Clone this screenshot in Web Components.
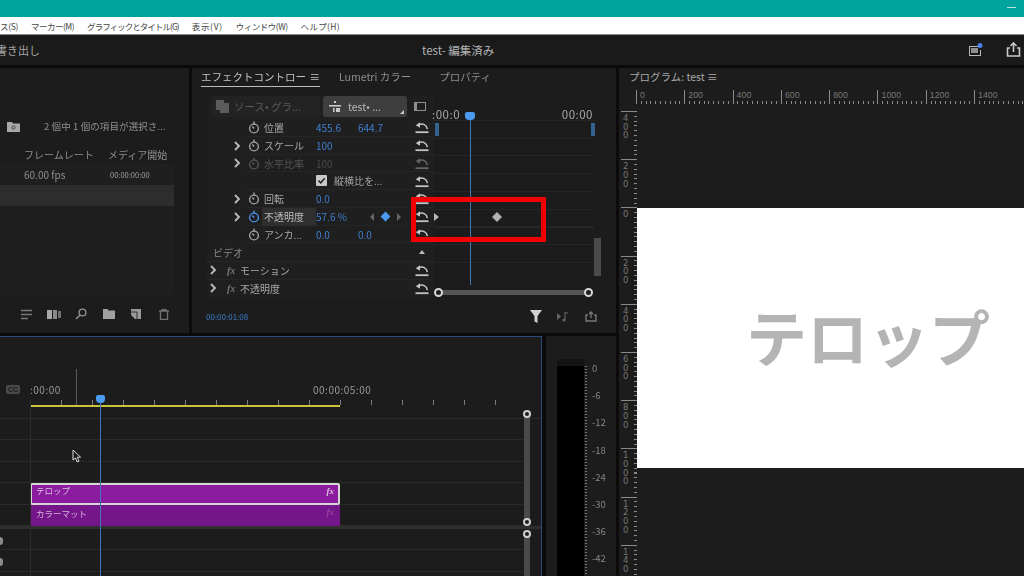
<!DOCTYPE html>
<html lang="ja">
<head>
<meta charset="utf-8">
<title>test - 編集済み</title>
<style>
  html, body { margin: 0; height: 100%; background: #0b0b0b; overflow: hidden; }
  body { font-family: "Noto Sans CJK JP", "Noto Sans", sans-serif; color: #a8a8a8; }
</style>
</head>
<body>
<app-shell></app-shell>

<script>
const icons = {
  stopwatch: (c = "#a0a0a0") => `<svg width="12" height="13" viewBox="0 0 12 13" fill="none" stroke="${c}" stroke-width="1.4"><circle cx="6" cy="7.5" r="4.4"/><path d="M6 0.6v3M6 7.5l-1.6-2"/></svg>`,
  reset: (c = "#c4c4c4") => `<svg width="14" height="13" viewBox="0 0 14 13" fill="none" stroke="${c}" stroke-width="1.5"><path d="M4 3.6c3.6-1.2 7.6-.2 8.4 4.6"/><path d="M0.8 4.2l4.2-3v5.6z" fill="${c}" stroke="none"/><path d="M0.5 11.2h13" stroke-width="1.8"/></svg>`,
  chevron: (c = "#b8b8b8") => `<svg width="8" height="10" viewBox="0 0 8 10" fill="none" stroke="${c}" stroke-width="1.9"><path d="M2 1l4 4-4 4"/></svg>`,
};

class AppShell extends HTMLElement {
  constructor() {
    super();
    this.attachShadow({ mode: "open" });
    this.shadowRoot.innerHTML = `
      <style>
        :host { display: flex; flex-direction: column; width: 1024px; height: 576px; overflow: hidden; filter: blur(0.35px); }
        .work { flex: 1; min-height: 0; display: flex; gap: 3px; padding-top: 3px; }
        .left { width: 616px; display: flex; flex-direction: column; gap: 3px; }
        .top { height: 265px; display: flex; gap: 3px; }
        .bottom { flex: 1; min-height: 0; display: flex; gap: 4px; }
        program-monitor { flex: 1; min-width: 0; }
      </style>
      <title-bar></title-bar>
      <menu-bar></menu-bar>
      <head-bar></head-bar>
      <div class="work">
        <div class="left">
          <div class="top">
            <project-panel></project-panel>
            <effect-panel></effect-panel>
          </div>
          <div class="bottom">
            <timeline-panel></timeline-panel>
            <audio-meter></audio-meter>
          </div>
        </div>
        <program-monitor></program-monitor>
      </div>
    `;
  }
}

class TitleBar extends HTMLElement {
  constructor() {
    super();
    this.attachShadow({ mode: "open" });
    this.shadowRoot.innerHTML = `
      <style>
        :host { display: flex; justify-content: flex-end; height: 17px; background: #00a49c; }
        i { width: 9px; height: 1px; margin: 7px 8px 0 0; background: #b5e6e2; }
      </style>
      <i></i>
    `;
  }
}

class MenuBar extends HTMLElement {
  constructor() {
    super();
    this.attachShadow({ mode: "open" });
    const items = [["ス(S)", -0.35], ["マーカー(M)", -0.5], ["グラフィックとタイトル(G)", -0.95], ["表示(V)", 0.7], ["ウィンドウ(W)", -0.5], ["ヘルプ(H)", 0.3]];
    this.shadowRoot.innerHTML = `
      <style>
        :host { display: flex; gap: 13px; height: 17px; align-items: center; background: #fff; border-bottom: 1px solid #8a8a8a; overflow: hidden; font-size: 8.5px; color: #444; white-space: nowrap; }
      </style>
      ${items.map(([t, s]) => `<span style="letter-spacing:${s}px">${t}</span>`).join("")}
    `;
  }
}

class HeadBar extends HTMLElement {
  constructor() {
    super();
    this.attachShadow({ mode: "open" });
    this.shadowRoot.innerHTML = `
      <style>
        :host { display: grid; grid-template-columns: 422px auto 1fr; align-items: center; height: 30px; background: #1a1a1a; overflow: hidden; white-space: nowrap; }
        .export { font-size: 11px; margin-left: -4px; color: #a5a5a5; }
        .name { font-size: 11.5px; color: #b4b4b4; }
        .tools { display: flex; justify-content: flex-end; gap: 23px; padding-right: 3px; align-items: center; }
      </style>
      <span class="export">書き出し</span>
      <span class="name">test- 編集済み</span>
      <div class="tools">
        <svg width="15" height="15" viewBox="0 0 15 15"><path d="M1 3h9v1H2v8h10V7h1v6H1z" fill="#b9b9b9"/><rect x="3" y="5" width="7" height="5" fill="#8e8e8e"/><circle cx="12" cy="2.5" r="2.5" fill="#4a84e6"/></svg>
        <svg width="15" height="16" viewBox="0 0 15 16" fill="none" stroke="#c8c8c8" stroke-width="1.6"><path d="M4 6H1.5v8h12V6H11M7.5 10V1.5M4.5 4l3-3 3 3"/></svg>
      </div>
    `;
  }
}

class ProjectPanel extends HTMLElement {
  constructor() {
    super();
    this.attachShadow({ mode: "open" });
    this.shadowRoot.innerHTML = `
      <style>
        :host { display: flex; flex-direction: column; width: 189px; background: #1c1c1c; overflow: hidden; white-space: nowrap; font-size: 9.5px; color: #8f8f8f; }
        .status { display: flex; align-items: center; height: 16px; margin-top: 50px; padding-left: 7px; }
        .status span { margin-left: 24px; font-size: 9.5px; letter-spacing: 0.1px; }
        .cols { display: grid; grid-template-columns: 84px auto; height: 14px; margin-top: 13px; padding-left: 24px; align-items: center; font-size: 10px; }
        .table { height: 133px; margin-top: 3px; width: 174px; box-sizing: border-box; background: #1f1f1f; border-radius: 0 6px 6px 0; }
        .row { display: grid; grid-template-columns: 86px auto; height: 21px; padding-left: 24px; align-items: center; font-size: 10px; }
        .row small { font-size: 7.5px; color: #a0a0a0; }
        .sel { background: #2d2d2d; }
        .tools { display: grid; grid-template-columns: repeat(6, 27.4px); padding: 11px 0 0 13px; align-items: center; justify-items: center; }
        .tools svg { display: block; }
      </style>
      <div class="status">
        <svg width="13" height="11" viewBox="0 0 13 11"><path d="M0 1h5l1 1.5h7V11H0z" fill="#a8a8a8"/><circle cx="6.5" cy="6.5" r="1.6" fill="none" stroke="#444"/></svg>
        <span>2 個中 1 個の項目が選択さ...</span>
      </div>
      <div class="cols"><span>フレームレート</span><span>メディア開始</span></div>
      <div class="table">
        <div class="row"><span>60.00 fps</span><small>00:00:00:00</small></div>
        <div class="row sel"></div>
      </div>
      <div class="tools">
        <svg width="13" height="11" viewBox="0 0 13 11" stroke="#777" stroke-width="1.5"><path d="M1 1.5h11M1 5.5h11M1 9.5h7"/></svg>
        <svg width="14" height="9" viewBox="0 0 14 9"><rect width="5" height="9" fill="#a8a8a8"/><rect x="6" width="4" height="9" fill="#8a8a8a"/><rect x="11" y="1" width="3" height="7" fill="#6e6e6e"/></svg>
        <svg width="12" height="12" viewBox="0 0 12 12" fill="none" stroke="#8f8f8f" stroke-width="1.4"><circle cx="7.5" cy="4.5" r="3.4"/><path d="M5 7l-4 4"/></svg>
        <svg width="12" height="10" viewBox="0 0 12 10"><path d="M0 0h4.5l1 1.5H12V10H0z" fill="#a0a0a0"/></svg>
        <svg width="10" height="10" viewBox="0 0 10 10"><path d="M0 0h10v10H4L0 6z" fill="#9a9a9a"/><path d="M0 3h6v7" fill="none" stroke="#333"/></svg>
        <svg width="10" height="11" viewBox="0 0 10 11" fill="none" stroke="#707070" stroke-width="1.3"><path d="M0 2h10M3 2V.7h4V2M1.5 2.5v8h7v-8"/></svg>
      </div>
    `;
  }
}

class EffectRow extends HTMLElement {
  constructor() {
    super();
    this.attachShadow({ mode: "open" });
  }
  connectedCallback() {
    const label = this.getAttribute("label") || "";
    const dim = this.hasAttribute("dim");
    const active = this.hasAttribute("active");
    const watch = active ? "#4a90e0" : dim ? "#555" : "#a0a0a0";
    this.shadowRoot.innerHTML = `
      <style>
        :host { display: grid; grid-template-columns: 9px 18px 56px 42px 1fr 14px; align-items: center; height: 17.75px; padding: 0 5px 0 26px; font-size: 10px; color: ${dim ? "#555" : "#a9a9a9"}; white-space: nowrap; background: linear-gradient(#262626, #262626) 40px 100% / 100% 1px no-repeat; }
        .chev, .reset { display: flex; }
        .watch { display: flex; padding-left: 6px; }
        .label { align-self: stretch; display: flex; align-items: center; margin-left: 2px; padding-left: 2px; ${active ? "background: #2f2f2f; color: #bdbdbd;" : ""} }
        .val { color: ${dim ? "#4a4a4a" : "#3f7fd0"}; }
        .slot { min-width: 0; color: #3f7fd0; }
      </style>
      <span class="chev">${this.hasAttribute("chev") ? icons.chevron() : ""}</span>
      <span class="watch">${this.hasAttribute("bare") ? "" : icons.stopwatch(watch)}</span>
      <span class="label">${label}</span>
      <span class="val">${this.getAttribute("v1") || ""}</span>
      <span class="slot"><slot></slot></span>
      <span class="reset">${icons.reset(dim ? "#666" : "#c4c4c4")}</span>
    `;
  }
}

class EffectGroup extends HTMLElement {
  constructor() {
    super();
    this.attachShadow({ mode: "open" });
    this.shadowRoot.innerHTML = `
      <style>
        :host { display: grid; grid-template-columns: 18px 13px 1fr 14px; align-items: center; height: 17.75px; padding: 0 5px 0 2px; font-size: 10px; color: #a9a9a9; white-space: nowrap; border-top: 1px solid #262626; box-sizing: border-box; }
        i { font: italic bold 10px "Liberation Serif", serif; color: #777; }
        .chev { display: flex; }
      </style>
      <span class="chev">${icons.chevron()}</span>
      <i>fx</i>
      <span><slot></slot></span>
      <span style="display:flex">${icons.reset()}</span>
    `;
  }
}

class EffectPanel extends HTMLElement {
  constructor() {
    super();
    this.attachShadow({ mode: "open" });
    this.shadowRoot.innerHTML = `
      <style>
        :host { display: flex; flex-direction: column; flex: 1; position: relative; background: #1c1c1c; overflow: hidden; white-space: nowrap; }
        .tabs { display: flex; height: 18px; padding-left: 9px; font-size: 10.5px; color: #8e8e8e; align-items: center; }
        .tab { height: 18px; line-height: 18px; overflow: hidden; }
        .on { width: 119px; color: #c2c2c2; border-bottom: 1px solid #bcbcbc; display: flex; justify-content: space-between; }
        .on b { font-weight: 400; }
        .body { display: flex; margin: 10px 0 0 15px; height: 202px; }
        .pane { width: 227px; background: #1f1f1f; border-radius: 3px 0 0 3px; flex: none; }
        .head { display: flex; height: 23px; align-items: flex-start; padding-left: 5px; box-sizing: border-box; }
        .src { display: flex; align-items: center; gap: 5px; width: 108px; height: 21px; box-sizing: border-box; padding-left: 4px; font-size: 10.5px; color: #5a5a5a; background: #232323; border-radius: 3px; }
        .seq { display: flex; align-items: center; gap: 7px; width: 84px; height: 21px; box-sizing: border-box; padding-left: 6px; margin-left: 3px; font-size: 10.5px; color: #b8b8b8; background: #3e3e3e; border-radius: 3px; position: relative; }
        .seq::after { content: ""; position: absolute; right: 3px; bottom: 3px; border: 2px solid transparent; border-right-color: #ccc; border-bottom-color: #ccc; }
        .sq { margin: 6px 0 0 7px; width: 12px; height: 9px; border: 1px solid #8e8e8e; border-left-width: 3px; box-sizing: border-box; }
        .group { display: grid; grid-template-columns: 1fr 8px; align-items: center; height: 17.75px; padding: 0 7px 0 6px; font-size: 10px; color: #888; box-sizing: border-box; }
        .group i { width: 0; height: 0; border: 3.5px solid transparent; border-top: 0; border-bottom: 4px solid #bbb; }
        .nav { display: flex; align-items: center; margin-left: 12px; gap: 8px; }
        .nav .t { width: 0; height: 0; border: 4px solid transparent; }
        .nav .l { border-right: 4.5px solid #666; border-left: 0; }
        .nav .r { border-left: 4.5px solid #666; border-right: 0; }
        .nav .d { width: 7px; height: 7px; background: #4a9bef; transform: rotate(45deg); }
        .check { display: inline-flex; align-items: center; gap: 7px; color: #a0a0a0; }
        .check svg { display: block; }
        .keys { flex: 1; position: relative; }
        .time { display: flex; justify-content: space-between; width: 159px; height: 24px; font-size: 11.5px; letter-spacing: 0.5px; color: #a8a8a8; line-height: 36px; }
        .lines { position: absolute; left: 0; top: 24px; width: 160px; height: 160px; background: repeating-linear-gradient(#262626 0 1px, transparent 1px 17.75px); }
        .mark { position: absolute; top: 27px; width: 4px; height: 13px; background: #33628f; }
        .kf { position: absolute; }
        .thumb { position: absolute; left: 160px; top: 142px; width: 7px; height: 38px; background: #4a4a4a; }
        .range { position: absolute; left: 4px; top: 194px; width: 151px; height: 5px; background: #555; }
        .range i { position: absolute; top: -2px; width: 5px; height: 5px; border: 2px solid #d8d8d8; border-radius: 50%; background: #1c1c1c; }
        .head-pin { position: absolute; left: 31px; top: 16px; width: 10px; height: 8px; background: #4a9bef; border-radius: 2px 2px 4px 4px; }
        .pin { position: absolute; left: 36px; top: 22px; width: 1px; height: 167px; background: #3f76b5; }
        .foot { display: flex; align-items: center; margin: 8px 0 0 14px; padding-right: 19px; height: 20px; font-size: 8px; color: #3f7fd0; }
        .foot span { flex: 1; }
        .foot div { display: flex; gap: 15px; align-items: center; }
        .callout { position: absolute; left: 219px; top: 129px; width: 135px; height: 45px; box-sizing: border-box; border: 5.5px solid #f00000; }
      </style>
      <div class="tabs">
        <div class="tab on"><b>エフェクトコントロー</b><span>≡</span></div>
        <div class="tab" style="margin-left:19px">Lumetri カラー</div>
        <div class="tab" style="margin-left:28px">プロパティ</div>
      </div>
      <div class="body">
        <div class="pane">
          <div class="head">
            <div class="src">
              <svg width="13" height="13" viewBox="0 0 13 13"><path d="M0 0h8v3h5v10H4v-3H0z" fill="#5c5c5c"/></svg>
              <span>ソース• グラ...</span>
            </div>
            <div class="seq">
              <svg width="12" height="11" viewBox="0 0 12 11" fill="#c8c8c8"><rect x="5" width="2" height="2"/><rect y="4" width="12" height="1.6"/><rect x="4" y="7" width="1.6" height="4"/><rect x="7" y="7" width="4" height="4"/></svg>
              <span>test• ...</span>
            </div>
            <span class="sq"></span>
          </div>
          <div class="rows">
            <effect-row label="位置" v1="455.6"><span>644.7</span></effect-row>
            <effect-row label="スケール" v1="100" chev></effect-row>
            <effect-row label="水平比率" v1="100" chev dim></effect-row>
            <effect-row bare>
              <span class="check" style="margin-left:-42px">
                <svg width="11" height="11" viewBox="0 0 11 11"><rect width="11" height="11" rx="1" fill="#c8c8c8"/><path d="M2.5 5.5l2.2 2.3 4-4.5" fill="none" stroke="#222" stroke-width="1.5"/></svg>
                縦横比を...
              </span>
            </effect-row>
            <effect-row label="回転" v1="0.0" chev></effect-row>
            <effect-row label="不透明度" v1="57.6 %" chev active>
              <span class="nav"><i class="t l"></i><i class="d"></i><i class="t r"></i></span>
            </effect-row>
            <effect-row label="アンカ..." v1="0.0"><span>0.0</span></effect-row>
          </div>
          <div class="group"><span>ビデオ</span><i></i></div>
          <effect-group>モーション</effect-group>
          <effect-group>不透明度</effect-group>
        </div>
        <div class="keys">
          <div class="time"><span style="margin-left:-2px">:00:0</span><span>00:00</span></div>
          <div class="lines"></div>
          <i class="mark" style="left:1px"></i>
          <i class="mark" style="left:157px"></i>
          <svg class="kf" style="left:0;top:117px" width="5" height="8" viewBox="0 0 5 8"><path d="M0 0l5 4-5 4z" fill="#b8b8b8"/></svg>
          <svg class="kf" style="left:58px;top:116px" width="10" height="10" viewBox="0 0 10 10"><path d="M5 0l5 5-5 5-5-5z" fill="#b0b0b0"/></svg>
          <i class="thumb"></i>
          <div class="range"><i style="left:-4px"></i><i style="right:-4px"></i></div>
          <i class="pin"></i>
          <i class="head-pin"></i>
        </div>
      </div>
      <div class="foot">
        <span>00:00:01:08</span>
        <div>
          <svg width="12" height="13" viewBox="0 0 12 13"><path d="M0 0h12L7.5 6v7l-3-1.5V6z" fill="#d0d0d0"/></svg>
          <svg width="13" height="11" viewBox="0 0 13 11"><path d="M0 2l4 3.5L0 9z" fill="#666"/><path d="M8 9V1l3 1.5" fill="none" stroke="#666"/><circle cx="7" cy="9" r="1.6" fill="#666"/></svg>
          <svg width="12" height="11" viewBox="0 0 12 11" fill="none" stroke="#777" stroke-width="1.4"><path d="M3 4H1v6h10V4H9M6 7V1M4 3l2-2 2 2"/></svg>
        </div>
      </div>
      <div class="callout"></div>
    `;
  }
}

class TimelinePanel extends HTMLElement {
  constructor() {
    super();
    this.attachShadow({ mode: "open" });
    const track = (content = "") => `<div class="track">${content}</div>`;
    this.shadowRoot.innerHTML = `
      <style>
        :host { display: flex; flex-direction: column; width: 542px; position: relative; box-sizing: border-box; background: #1c1c1c; border-top: 1px solid #2b4a78; border-right: 1px solid #2b4a78; overflow: hidden; white-space: nowrap; }
        .labels { display: flex; align-items: center; height: 62px; padding-top: 43px; box-sizing: border-box; flex: none; }
        .cc { width: 14px; height: 9px; margin-left: 6px; border-radius: 2px; background: #4a4a4a; color: #1c1c1c; font: bold 7px/9px "Liberation Sans", sans-serif; text-align: center; }
        .tc { font-size: 10px; letter-spacing: 0.5px; color: #9a9a9a; }
        .ruler { height: 20px; flex: none; position: relative; box-sizing: border-box; border-bottom: 1px solid #2a2a2a; padding-left: 30px; }
        .ticks { height: 5px; margin-top: 1px; width: 468px; background: repeating-linear-gradient(90deg, #7d7d7d 0 1px, transparent 1px 31px); }
        .bar { width: 310px; height: 2px; background: #c9c43c; }
        .tracks { flex: 1; min-height: 0; }
        .track { height: 21.4px; box-sizing: border-box; border-bottom: 1px solid #2a2a2a; padding-left: 30px; display: flex; margin-right: 18px; }
        .split { height: 3px; background: #2f2f2f; }
        .clip { width: 310px; height: 21.4px; box-sizing: border-box; padding-left: 6px; font-size: 8.5px; line-height: 16px; color: #d8b8dc; display: flex; justify-content: space-between; }
        .clip i { font: italic bold 9px/15px "Liberation Serif", serif; padding-right: 6px; }
        .a { background: #8c1c9f; border: 2px solid #d6d6d6; border-radius: 2px; padding-left: 4px; color: #dcc0e0; line-height: 11px; }
        .a i { line-height: 13px; padding-right: 4px; }
        .b { background: #74158a; }
        .b i { color: #94449f; }
        .col { position: absolute; left: 30px; top: 62px; bottom: 0; width: 1px; background: #2a2a2a; }
        .stem { position: absolute; left: 76px; top: 32px; width: 1px; height: 36px; background: #5a5a5a; }
        .pin { position: absolute; left: 100px; top: 63px; bottom: 0; width: 1px; background: #3f76b5; }
        .pinhead { position: absolute; left: 96px; top: 58px; width: 9px; height: 8px; background: #4a9bef; border-radius: 2px 2px 4px 4px; }
        .v { position: absolute; left: 524px; width: 6px; background: #4a4a4a; }
        .knob { position: absolute; left: 523px; width: 4px; height: 4px; border: 2px solid #d0d0d0; border-radius: 50%; background: #1c1c1c; }
        .mic { position: absolute; left: -3px; width: 6px; height: 8px; border-radius: 3px; background: #8a8a8a; }
        .cursor { position: absolute; left: 72px; top: 112px; }
      </style>
      <div class="labels">
        <span class="cc">CC</span>
        <span class="tc" style="margin-left:10px;width:283px">:00:00</span>
        <span class="tc">00:00:05:00</span>
      </div>
      <div class="ruler"><div class="ticks"></div><div class="bar"></div></div>
      <div class="tracks">
        ${track()}${track()}${track()}
        ${track('<div class="clip a"><span>テロップ</span><i>fx</i></div>')}
        ${track('<div class="clip b"><span>カラーマット</span><i>fx</i></div>')}
        <div class="split"></div>
        ${track()}${track()}${track()}
      </div>
      <i class="col"></i>
      <i class="stem"></i>
      <i class="pin"></i>
      <i class="pinhead"></i>
      <i class="v" style="top:77px;height:107px"></i>
      <i class="v" style="top:197px;bottom:0"></i>
      <i class="knob" style="top:73px"></i>
      <i class="knob" style="top:181px"></i>
      <i class="knob" style="top:193px"></i>
      <i class="mic" style="top:200px"></i>
      <i class="mic" style="top:221px"></i>
      <svg class="cursor" width="10" height="15" viewBox="0 0 10 15"><path d="M1 1v10l2.4-2 1.8 4 1.8-.8-1.8-4H8.6z" fill="#1c1c1c" stroke="#d8d8d8"/></svg>
    `;
  }
}

class AudioMeter extends HTMLElement {
  constructor() {
    super();
    this.attachShadow({ mode: "open" });
    const marks = ["0", "-6", "-12", "-18", "-24", "-30", "-36", "-42"];
    this.shadowRoot.innerHTML = `
      <style>
        :host { display: flex; flex: 1; background: #1c1c1c; overflow: hidden; padding: 23px 0 0 11px; box-sizing: border-box; font-size: 9.5px; color: #858585; }
        .bar { width: 27px; background: #000; border-top: 7px solid #141414; flex: none; }
        .scale { flex: 1; padding-top: 2px; background: repeating-linear-gradient(#777 0 1px, transparent 1px 3px) 1px 7px / 2px 100% no-repeat; }
        .scale div { height: 27.2px; padding-left: 8px; line-height: 14px; }
      </style>
      <div class="bar"></div>
      <div class="scale">${marks.map((m) => `<div>${m}</div>`).join("")}</div>
    `;
  }
}

class MonitorRuler extends HTMLElement {
  constructor() {
    super();
    this.attachShadow({ mode: "open" });
  }
  connectedCallback() {
    const labels = (this.getAttribute("labels") || "").split(",");
    const vertical = this.hasAttribute("vertical");
    this.shadowRoot.innerHTML = `
      <style>
        :host { display: flex; flex-direction: ${vertical ? "column" : "row"}; color: #777; overflow: hidden; box-sizing: border-box; }
        :host([vertical]) { width: 16px; white-space: normal; font: 8.5px/8.7px "DejaVu Sans", sans-serif; background: repeating-linear-gradient(#8a8a8a 0 1px, transparent 1px 4.82px) right 0 / 3px 100% no-repeat; }
        :host(:not([vertical])) { height: 14px; font: 8.8px/11px "Liberation Sans", sans-serif; background: repeating-linear-gradient(90deg, #8a8a8a 0 1px, transparent 1px 4.83px) 0 bottom / 100% 3px no-repeat; }
        div { flex: none; box-sizing: border-box; }
        .h { width: 48.3px; padding-left: 3px; border-left: 1px solid #8a8a8a; height: 13px; }
        .v { height: 48.2px; width: 16px; padding: 2px 0 0 2px; border-top: 1px solid #8a8a8a; }
        .v span { display: block; width: 6px; word-break: break-all; }
      </style>
      ${labels.map((l) => vertical ? `<div class="v"><span>${l}</span></div>` : `<div class="h">${l}</div>`).join("")}
    `;
  }
}

class ProgramMonitor extends HTMLElement {
  constructor() {
    super();
    this.attachShadow({ mode: "open" });
    this.shadowRoot.innerHTML = `
      <style>
        :host { display: flex; flex-direction: column; background: #1c1c1c; overflow: hidden; white-space: nowrap; }
        .title { height: 22px; padding-left: 10px; font-size: 10.5px; line-height: 17px; color: #a8a8a8; flex: none; }
        .hr { margin-left: 17px; flex: none; }
        .view { display: flex; flex: 1; min-height: 0; padding-left: 2px; }
        monitor-ruler[vertical] { flex: none; margin-top: 7px; }
        .stage { flex: 1; padding-top: 104px; min-width: 0; }
        .frame { height: 260px; background: #fff; display: flex; align-items: center; overflow: hidden; }
        .frame span { margin: 0 0 0 109px; font-size: 61px; font-weight: 700; color: #b4b4b4; position: relative; top: -3px; }
      </style>
      <div class="title">プログラム: test ≡</div>
      <monitor-ruler class="hr" labels="0,200,400,600,800,1000,1200,1400"></monitor-ruler>
      <div class="view">
        <monitor-ruler vertical labels="400,200,0,200,400,600,800,1000,1200,140"></monitor-ruler>
        <div class="stage"><div class="frame"><span>テロップ</span></div></div>
      </div>
    `;
  }
}

customElements.define("effect-row", EffectRow);
customElements.define("effect-group", EffectGroup);
customElements.define("monitor-ruler", MonitorRuler);
customElements.define("title-bar", TitleBar);
customElements.define("menu-bar", MenuBar);
customElements.define("head-bar", HeadBar);
customElements.define("project-panel", ProjectPanel);
customElements.define("effect-panel", EffectPanel);
customElements.define("timeline-panel", TimelinePanel);
customElements.define("audio-meter", AudioMeter);
customElements.define("program-monitor", ProgramMonitor);
customElements.define("app-shell", AppShell);
</script>
</body>
</html>
